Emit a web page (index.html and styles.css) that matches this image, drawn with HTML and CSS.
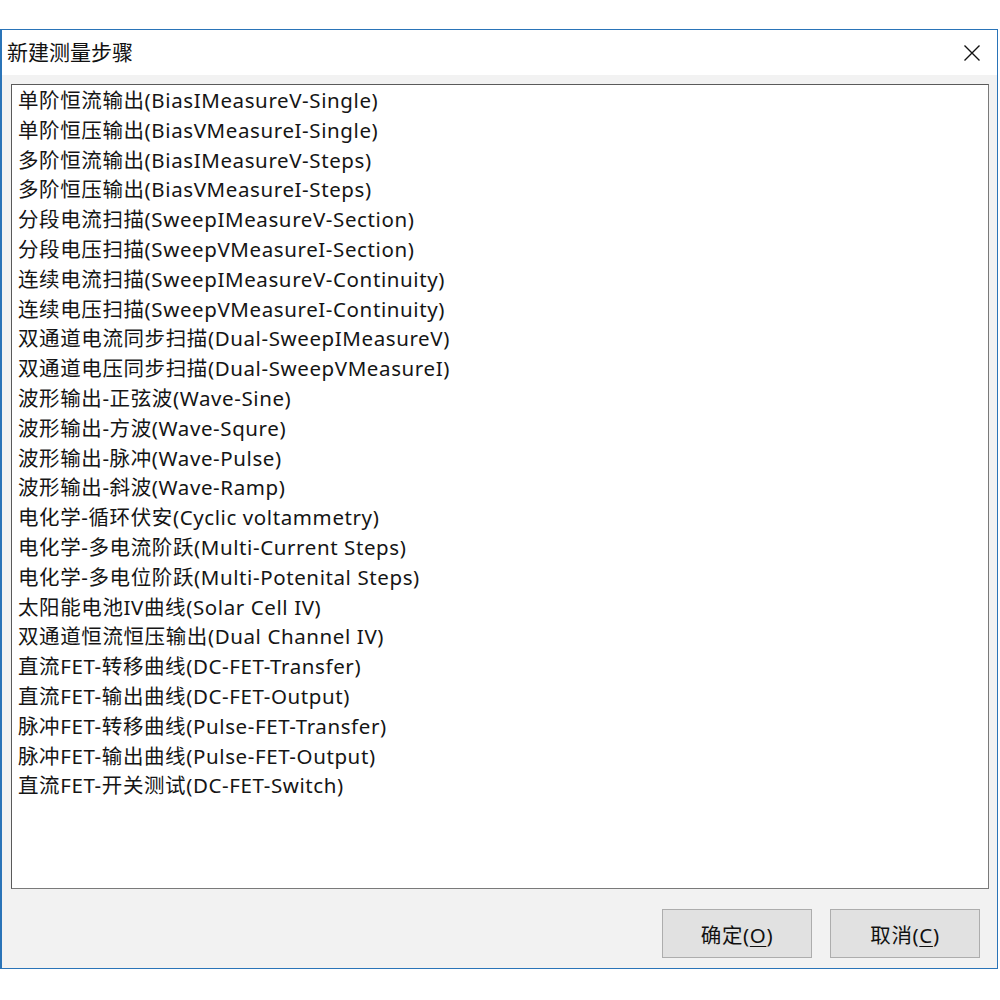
FILE: index.html
```html
<!DOCTYPE html>
<html lang="zh-CN">
<head>
<meta charset="utf-8">
<title>新建测量步骤</title>
<link rel="stylesheet" href="styles.css">
</head>
<body>
<div class="window">
  <div class="titlebar">
    <span class="title">新建测量步骤</span>
    <span class="close">
      <svg width="18" height="16" viewBox="0 0 18 16"><path d="M1.5 0.5 L16.5 15.5 M16.5 0.5 L1.5 15.5" stroke="#111" stroke-width="1.4" fill="none"/></svg>
    </span>
  </div>
  <div class="client">
    <ul class="list">
      <li>单阶恒流输出(BiasIMeasureV-Single)</li>
      <li>单阶恒压输出(BiasVMeasureI-Single)</li>
      <li>多阶恒流输出(BiasIMeasureV-Steps)</li>
      <li>多阶恒压输出(BiasVMeasureI-Steps)</li>
      <li>分段电流扫描(SweepIMeasureV-Section)</li>
      <li>分段电压扫描(SweepVMeasureI-Section)</li>
      <li>连续电流扫描(SweepIMeasureV-Continuity)</li>
      <li>连续电压扫描(SweepVMeasureI-Continuity)</li>
      <li>双通道电流同步扫描(Dual-SweepIMeasureV)</li>
      <li>双通道电压同步扫描(Dual-SweepVMeasureI)</li>
      <li>波形输出-正弦波(Wave-Sine)</li>
      <li>波形输出-方波(Wave-Squre)</li>
      <li>波形输出-脉冲(Wave-Pulse)</li>
      <li>波形输出-斜波(Wave-Ramp)</li>
      <li>电化学-循环伏安(Cyclic voltammetry)</li>
      <li>电化学-多电流阶跃(Multi-Current Steps)</li>
      <li>电化学-多电位阶跃(Multi-Potenital Steps)</li>
      <li>太阳能电池IV曲线(Solar Cell IV)</li>
      <li>双通道恒流恒压输出(Dual Channel IV)</li>
      <li>直流FET-转移曲线(DC-FET-Transfer)</li>
      <li>直流FET-输出曲线(DC-FET-Output)</li>
      <li>脉冲FET-转移曲线(Pulse-FET-Transfer)</li>
      <li>脉冲FET-输出曲线(Pulse-FET-Output)</li>
      <li>直流FET-开关测试(DC-FET-Switch)</li>
    </ul>
    <div class="buttons">
      <button class="btn">确定(<u>O</u>)</button>
      <button class="btn">取消(<u>C</u>)</button>
    </div>
  </div>
</div>
</body>
</html>
```

FILE: styles.css
```css
html, body {
  margin: 0;
  padding: 0;
  background: #ffffff;
}

body {
  font-family: "Noto Sans", "Noto Sans CJK SC", sans-serif;
  color: #111;
}

.window {
  box-sizing: border-box;
  margin-top: 29px;
  width: 998px;
  height: 940px;
  border: 1px solid #2a74b8;
  border-left-width: 2px;
  display: flex;
  flex-direction: column;
  background: #f2f2f2;
}

.titlebar {
  height: 45px;
  background: #ffffff;
  display: flex;
  align-items: center;
  justify-content: space-between;
  padding: 0 16px 0 5px;
  flex: none;
}

.title {
  font-size: 21px;
  line-height: 1;
  margin-top: -1px;
  color: #111;
}

.close {
  display: flex;
  width: 18px;
  height: 16px;
}

.client {
  flex: 1;
  display: flex;
  flex-direction: column;
  padding: 9px 8px 0 9px;
  background: #f2f2f2;
}

.list {
  list-style: none;
  margin: 0;
  padding: 1px 0 0 6px;
  height: 805px;
  box-sizing: border-box;
  background: #ffffff;
  border: 1px solid #7a7a7a;
  border-top-color: #5a5a5a;
  border-left-color: #5a5a5a;
  font-size: 20.5px;
  line-height: 29.8px;
  letter-spacing: 0.6px;
  color: #151515;
  overflow: hidden;
}

.list li {
  white-space: nowrap;
}

.buttons {
  display: flex;
  justify-content: flex-end;
  gap: 18px;
  padding: 20px 9px 0 0;
}

.btn {
  box-sizing: border-box;
  width: 150px;
  height: 49px;
  background: #e1e1e1;
  border: 1px solid #adadad;
  font-family: "Noto Sans", "Noto Sans CJK SC", sans-serif;
  font-size: 20.5px;
  letter-spacing: 0.6px;
  color: #111;
  padding: 0;
}

.btn u {
  text-decoration-thickness: 1px;
  text-underline-offset: 3px;
}
```
